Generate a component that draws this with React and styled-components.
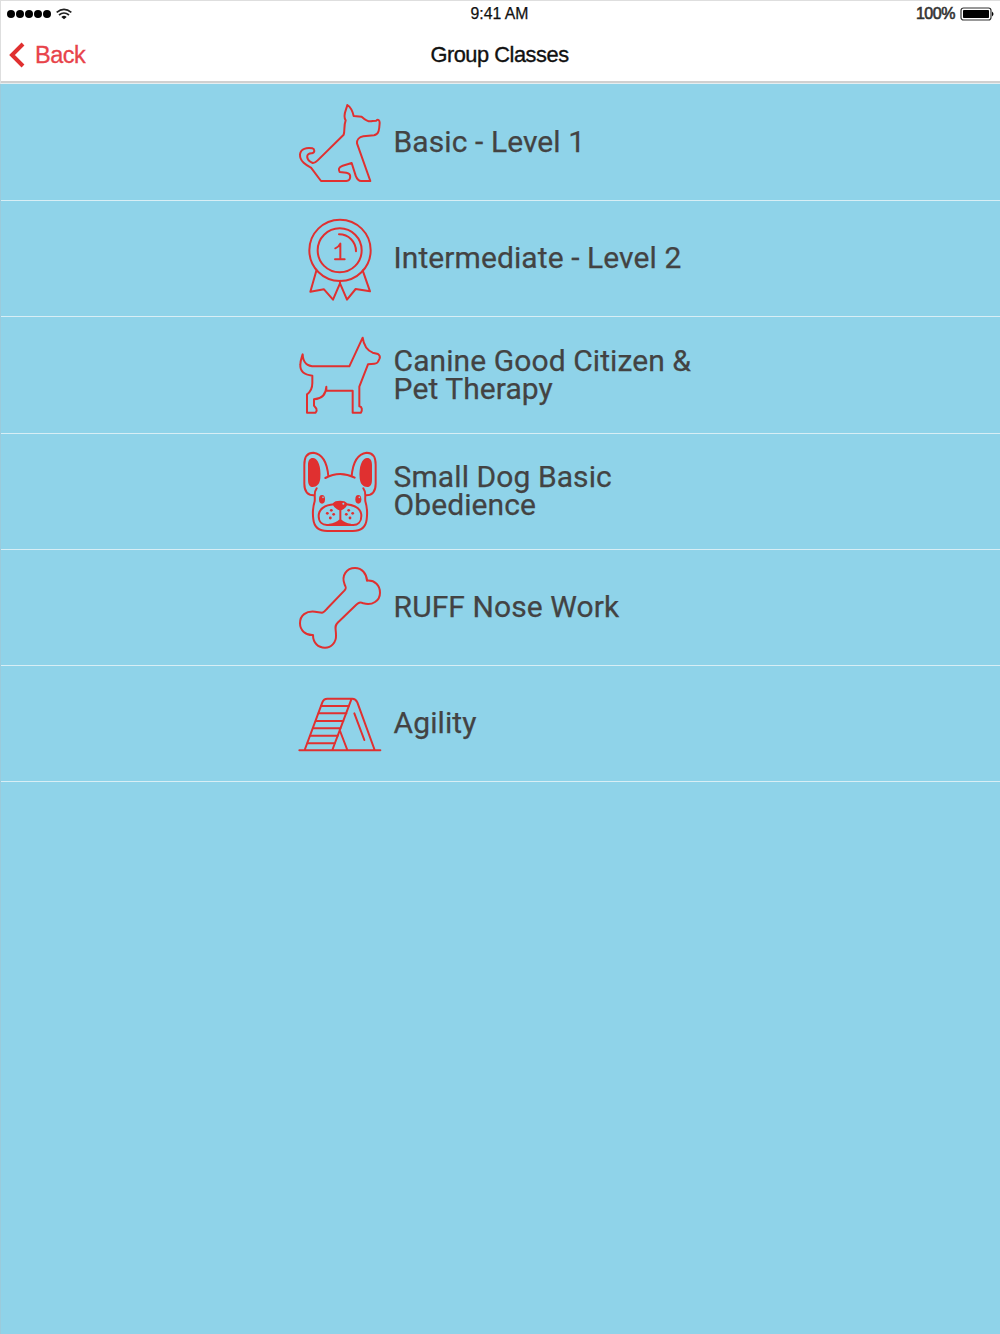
import React from 'react';
import styled, { createGlobalStyle } from 'styled-components';

const Color = {
  accent: '#e03030',
  back: '#e8434a',
  background: '#8fd3e9',
  text: '#434343',
  line: '#d8eef5'
};

const SittingDog = () => (
  <path d="M93 258 L63 218 C50 211 29 200 30 178 C32 161 50 157 67 160 C74 162 76 173 66 175 C46 174 47 195 68 204 C74 205 79 200 83 196 L161 119 C165 108 161 91 167 76 C157 61 169 45 172 30 C180 35 188 50 191 63 L215 65 C224 73 234 83 247 78 L259 77 C264 71 269 76 269 83 C268 99 268 119 252 121 L220 124 C207 126 200 135 201 145 L241 258 H215 C204 259 200 250 197 242 L185 204 L158 212 C145 216 145 224 149 231 L169 233 C186 236 183 256 169 258 Z" />
);

const Ribbon = () => (
  <>
    <circle cx="150" cy="120" r="92" />
    <circle cx="149" cy="120" r="66" />
    <path d="M147 72 C176 72 198 94 198 123" />
    <path d="M136 114 C142 112 148 106 151 100 V147 M135 147 H164" />
    <path d="M79 181 L61 244 L102 237 L129 268 L150 219 L171 268 L197 236 L240 243 L218 180 M150 211 V222" />
  </>
);

const StandingDog = () => (
  <path d="M51 260 V205 C65 195 67 183 67 171 V149 C43 147 30 135 31 116 C31 104 35 95 38 85 C39 108 48 121 75 121 H178 L218 35 C221 57 231 73 248 80 L264 84 C270 88 271 91 269 97 C264 107 265 112 253 113 L234 115 L208 182 V241 C217 243 217 252 213 260 H188 V194 H109 V182 C108 207 94 218 72 220 V239 L79 248 C81 253 80 257 77 260 Z" />
);

const Bulldog = () => (
  <>
    <path d="M71 160 C49 159 43 145 43 125 V68 C43 43 54 32 70 32 C99 36 112 64 115 103 M106 108 C134 93 166 93 194 107 M229 160 C251 159 257 145 257 125 V68 C257 43 246 32 230 32 C201 36 188 64 185 103" />
    <path d="M80 139 C70 151 76 163 74 178 C68 198 67 211 70 232 C73 259 90 267 112 267 H188 C210 267 227 259 230 232 C233 211 232 198 226 178 C224 163 230 151 220 139" />
    <path d="M132 187 C104 189 86 202 86 222 C86 241 98 249 111 249 H190 C203 249 214 240 214 222 C214 202 197 190 169 187 M151 202 V235 M151 234 C143 242 132 247 118 248 M151 234 C159 242 170 247 182 248" />
    <Solid d="M70 48 C84 49 94 74 91 109 C89 128 79 136 66 135 C56 133 54 124 54 111 V70 C54 54 60 47 70 48 Z M230 48 C216 49 206 74 209 109 C211 128 221 136 234 135 C244 133 246 124 246 111 V70 C246 54 240 47 230 48 Z" />
    <Solid d="M129 184 C134 174 166 174 171 184 C174 194 157 205 151 205 C144 205 126 194 129 184 Z M128 249 L151 236 L174 249 Z" />
    <SolidEllipse cx="96" cy="172" rx="9" ry="13" />
    <SolidEllipse cx="205" cy="172" rx="9" ry="13" />
    {[[124, 205], [112, 214], [131, 217], [121, 228], [176, 205], [169, 217], [188, 214], [180, 228]].map(
      ([x, y]) => <SolidEllipse key={`${x}-${y}`} cx={x} cy={y} rx="4.2" ry="4.2" />
    )}
    <Glint cx="99" cy="166" r="2.5" />
    <Glint cx="208" cy="166" r="2.5" />
    <Glint cx="160" cy="185" r="3" />
  </>
);

const Bone = () => (
  <path d="M96 164 C102 164 107 156 113 150 L163 98 C171 89 167 88 164 80 C153 52 170 30 195 30 C216 30 230 47 231 68 C255 66 270 82 270 104 C270 128 247 144 220 136 C209 131 205 135 198 141 L143 194 C132 205 138 211 138 232 C139 253 124 269 105 269 C84 269 69 254 69 231 C47 232 30 217 30 196 C30 172 48 158 75 161 Z" />
);

const Ramp = () => (
  <>
    <path d="M28 211 H271 M44 210 L97 67 C100 59 104 56 112 56 H187 C196 56 199 61 202 67 L254 210 M184 58 L127 210 M149 150 L172 210 M193 100 L223 180" />
    <path d="M93 78 H176 M86 100 H169 M79 123 H160 M70 145 H151 M61 167 H143 M53 190 H134" />
  </>
);

const classes = [
  { name: 'Basic - Level 1', Icon: SittingDog, top: -9 },
  { name: 'Intermediate - Level 2', Icon: Ribbon, top: -4 },
  { name: 'Canine Good Citizen &\nPet Therapy', Icon: StandingDog, top: -3 },
  { name: 'Small Dog Basic\nObedience', Icon: Bulldog, top: -3 },
  { name: 'RUFF Nose Work', Icon: Bone, top: -3 },
  { name: 'Agility', Icon: Ramp, top: -18 }
];

export default () => (
  <Screen>
    <GlobalStyle />
    <Header>
      <StatusBar>
        <Signal>
          {[0, 1, 2, 3, 4].map(dot => (
            <Dot key={dot} />
          ))}
          <Wifi viewBox="0 0 48 36">
            <path d="M2 13 Q24 -5 46 13 M9 21 Q24 9 39 21" />
            <path d="M16 27 Q24 20 32 27 L24 34 Z" fill="#111" strokeWidth="0" />
          </Wifi>
        </Signal>
        <Clock>9:41 AM</Clock>
        <Power>
          100%
          <Battery viewBox="0 0 34 14">
            <rect x="1" y="1" width="30" height="12" rx="2.5" fill="none" stroke="#333" strokeWidth="1.2" />
            <rect x="3" y="3" width="26" height="8" rx="0.8" />
            <path d="M32 4.5 Q35 7 32 9.5 Z" />
          </Battery>
        </Power>
      </StatusBar>
      <NavBar>
        <BackButton>
          <Chevron viewBox="0 0 16 26">
            <path d="M14 2 L3 13 L14 24" />
          </Chevron>
          Back
        </BackButton>
        <Title>Group Classes</Title>
      </NavBar>
    </Header>
    <List>
      {classes.map(({ name, Icon, top }) => (
        <Row key={name}>
          <RowIcon viewBox={`0 ${top} 300 300`}>
            <Icon />
          </RowIcon>
          <Label>{name}</Label>
        </Row>
      ))}
    </List>
  </Screen>
);

const GlobalStyle = createGlobalStyle`
  body {
    margin: 0;
    background: ${Color.background};
  }
`;
const Screen = styled.div`
  display: flex;
  flex-direction: column;
  width: 1000px;
  height: 1334px;
  overflow: hidden;
  background: ${Color.background};
`;
const Header = styled.header`
  box-sizing: border-box;
  flex: none;
  height: 84px;
  background: #fff;
  border-top: 1px solid #dedede;
  border-left: 1px solid #dedede;
  border-bottom: 1px solid #e4eef1;
  box-shadow: inset 0 -2px #d0d0d0;
  font-family: 'Liberation Sans', Arial, sans-serif;
  color: #111;
`;
const StatusBar = styled.div`
  display: grid;
  grid-template-columns: 1fr auto 1fr;
  align-items: center;
  height: 24px;
  padding: 0 6px;
`;
const Signal = styled.div`
  display: flex;
  align-items: center;
  gap: 1px;
`;
const Dot = styled.span`
  width: 8px;
  height: 8px;
  border-radius: 50%;
  background: #000;
`;
const Wifi = styled.svg`
  width: 16px;
  height: 12px;
  margin-left: 4px;
  fill: none;
  stroke: #222;
  stroke-width: 5;
`;
const Clock = styled.span`
  margin-right: 2px;
  padding-top: 1px;
  font-size: 15.8px;
  line-height: 24px;
  -webkit-text-stroke: 0.25px #111;
`;
const Power = styled.div`
  display: flex;
  align-items: center;
  justify-content: flex-end;
  gap: 5px;
  font-size: 16px;
  letter-spacing: -0.45px;
  color: #333;
  -webkit-text-stroke: 0.6px #333;
`;
const Battery = styled.svg`
  width: 34px;
  height: 14px;
  fill: #000;
`;
const NavBar = styled.div`
  box-sizing: border-box;
  display: grid;
  grid-template-columns: 1fr auto 1fr;
  align-items: center;
  height: 56px;
  padding: 3px 8px 0;
`;
const BackButton = styled.div`
  display: flex;
  align-items: center;
  gap: 10px;
  padding-top: 1px;
  color: ${Color.back};
  font-size: 23.5px;
  letter-spacing: -0.5px;
  -webkit-text-stroke: 0.3px ${Color.back};
`;
const Chevron = styled.svg`
  width: 16px;
  height: 26px;
  fill: none;
  stroke: ${Color.accent};
  stroke-width: 4;
`;
const Title = styled.h1`
  margin: 0 2px 0 0;
  font-size: 21.8px;
  font-weight: 400;
  letter-spacing: -0.46px;
  -webkit-text-stroke: 0.35px #111;
`;
const List = styled.div`
  display: flex;
  flex: 1;
  flex-direction: column;
  padding-top: 0.75px;
  border-left: 1px solid #9bcbdc;
`;
const Row = styled.div`
  box-sizing: border-box;
  display: flex;
  align-items: center;
  flex: none;
  height: 116.25px;
  padding-left: 289px;
  border-bottom: 1px solid ${Color.line};
`;
const RowIcon = styled.svg`
  width: 100px;
  height: 100px;
  flex: none;
  overflow: visible;
  fill: none;
  stroke: ${Color.accent};
  stroke-width: 6;
  stroke-linejoin: round;
  stroke-linecap: round;
`;
const Solid = styled.path`
  fill: ${Color.accent};
  stroke: none;
`;
const SolidEllipse = styled.ellipse`
  fill: ${Color.accent};
  stroke: none;
`;
const Glint = styled.circle`
  fill: ${Color.background};
  stroke: none;
`;
const Label = styled.div`
  padding: 0 0 0.5px 3.6px;
  font-family: Roboto, sans-serif;
  font-size: 30px;
  line-height: 28px;
  letter-spacing: 0.08px;
  white-space: pre-line;
  color: ${Color.text};
  -webkit-text-stroke: 0.25px ${Color.text};
`;
